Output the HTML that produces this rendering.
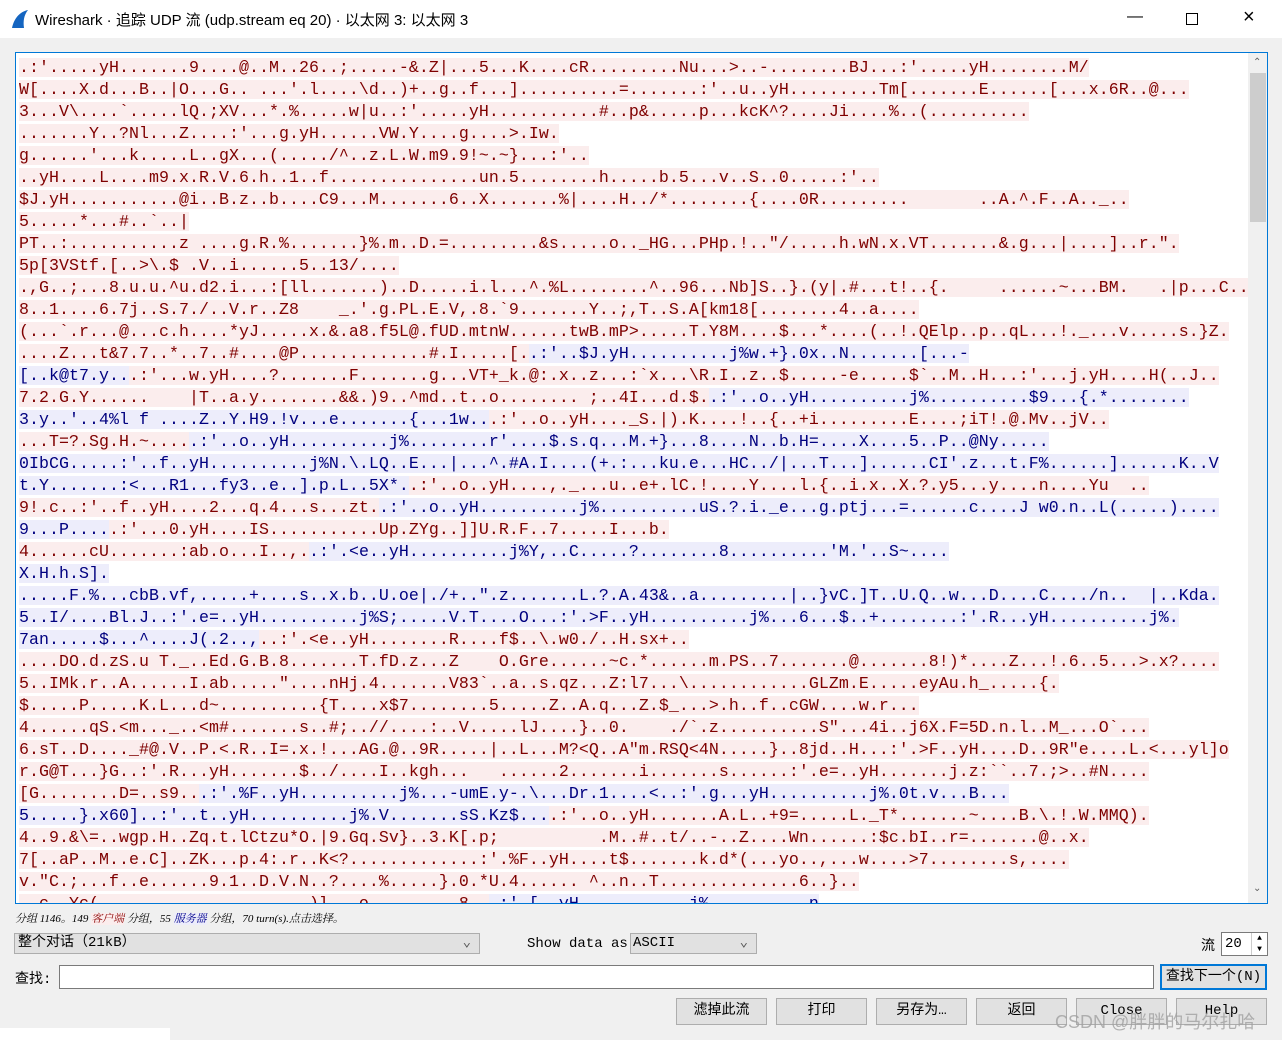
<!DOCTYPE html>
<html><head><meta charset="utf-8">
<style>
*{margin:0;padding:0;box-sizing:border-box}
body{width:1282px;height:1040px;background:#f0f0f0;font-family:"Liberation Sans","Noto Sans CJK SC",sans-serif;position:relative;overflow:hidden}
.title{position:absolute;left:0;top:0;width:1282px;height:38px;background:#fff;font-size:15px;color:#000}
.title .t{position:absolute;left:35px;top:9px}
.wc{position:absolute;top:8px;font-size:16px;color:#000}
.box{position:absolute;left:15px;top:52px;width:1253px;height:852px;background:#fff;border:1px solid #0078d7;overflow:hidden}
.txt{position:absolute;left:3px;top:4px;font-family:"Liberation Mono","DejaVu Sans Mono",monospace;font-size:16.6px;line-height:22px;letter-spacing:0.04px}
.txt div{height:22px;white-space:nowrap}
.txt span{white-space:pre}
.c{background:#fbeded;color:#7f0000}
.s{background:#ededfb;color:#00007f}
.sb{position:absolute;right:0;top:0;width:19px;height:850px;background:#f0f0f0}
.thumb{position:absolute;left:2px;top:20px;width:16px;height:149px;background:#cdcdcd}
.status{position:absolute;left:15px;top:910px;font-size:11px;font-style:italic;font-family:"Liberation Serif","Noto Serif CJK SC",serif}
.combo{position:absolute;background:#e1e1e1;border:1px solid #adadad;font-size:14px;font-family:"Liberation Mono","Noto Sans CJK SC",monospace}
.btn{position:absolute;top:998px;height:27px;width:91px;background:#e1e1e1;border:1px solid #adadad;font-size:14px;text-align:center;line-height:25px;font-family:"Liberation Mono","Noto Sans CJK SC",monospace}
.lbl{position:absolute;font-size:14px;font-family:"Liberation Mono","Noto Sans CJK SC",monospace}
</style></head><body>
<div class="title">
<svg style="position:absolute;left:10px;top:9px" width="20" height="20" viewBox="0 0 20 20"><path d="M2 19 C4 10 9 3 18 1 C14 6 13 12 14 19 Z" fill="#1565c0"/></svg>
<div class="t">Wireshark · 追踪 UDP 流 (udp.stream eq 20) · 以太网 3: 以太网 3</div>
<div class="wc" style="left:1127px">&#8212;</div>
<div style="position:absolute;left:1186px;top:13px;width:12px;height:12px;border:1px solid #000"></div>
<div class="wc" style="left:1243px;top:6px;font-size:20px">&#215;</div>
</div>
<div class="box">
<div class="txt"><div><span class="c">.:'.....yH.......9....@..M..26..;.....-&amp;.Z|...5...K....cR.........Nu...&gt;..-........BJ...:'.....yH........M/</span></div><div><span class="c">W[....X.d...B..|O...G.. ...'.l....\d..)+..g..f...]..........=.......:'..u..yH.........Tm[.......E......[...x.6R..@...</span></div><div><span class="c">3...V\....`.....lQ.;XV...*.%.....w|u..:'.....yH...........#..p&amp;.....p...kcK^?....Ji....%..(..........</span></div><div><span class="c">.......Y..?Nl...Z....:'...g.yH......VW.Y....g....&gt;.Iw.</span></div><div><span class="c">g......'...k.....L..gX...(...../^..z.L.W.m9.9!~.~}...:'..</span></div><div><span class="c">..yH....L....m9.x.R.V.6.h..1..f...............un.5........h.....b.5...v..S..0.....:'..</span></div><div><span class="c">$J.yH...........@i..B.z..b....C9...M.......6..X.......%|....H../*........{....0R.........       ..A.^.F..A.._..</span></div><div><span class="c">5.....*...#..`..|</span></div><div><span class="c">PT..:...........z ....g.R.%.......}%.m..D.=.........&amp;s.....o.._HG...PHp.!.."/.....h.wN.x.VT.......&amp;.g...|....]..r.".</span></div><div><span class="c">5p[3VStf.[..&gt;\.$ .V..i......5..13/....</span></div><div><span class="c">.,G..;...8.u.u.^u.d2.i...:[ll.......)..D.....i.l...^.%L........^..96...Nb]S..}.(y|.#...t!..{.     ......~...BM.   .|p...C..</span></div><div><span class="c">8..1....6.7j..S.7./..V.r..Z8    _.'.g.PL.E.V,.8.`9.......Y..;,T..S.A[km18[........4..a....</span></div><div><span class="c">(...`.r...@...c.h....*yJ.....x.&amp;.a8.f5L@.fUD.mtnW......twB.mP&gt;.....T.Y8M....$...*....(..!.QElp..p..qL...!._...v.....s.}Z.</span></div><div><span class="c">....Z...t&amp;7.7..*..7..#....@P.............#.I.....[.</span><span class="s">.:'..$J.yH..........j%w.+}.0x..N.......[...-</span></div><div><span class="s">[..k@t7.y..</span><span class="c">.:'...w.yH....?.......F.......g...VT+_k.@:.x..z...:`x...\R.I..z..$.....-e.....$`..M..H...:'...j.yH....H(..J..</span></div><div><span class="c">7.2.G.Y......    |T..a.y........&amp;&amp;.)9..^md..t..o........ ;..4I...d.$.</span><span class="s">.:'..o..yH..........j%..........$9...{.*........</span></div><div><span class="s">3.y..'..4%l f ....Z..Y.H9.!v...e.......{...1w..</span><span class="c">.:'..o..yH...._S.|).K....!..{..+i.........E....;iT!.@.Mv..jV..</span></div><div><span class="c">...T=?.Sg.H.~....</span><span class="s">.:'..o..yH..........j%........r'....$.s.q...M.+}...8....N..b.H=....X....5..P..@Ny.....</span></div><div><span class="s">0IbCG.....:'..f..yH..........j%N.\.LQ..E...|...^.#A.I....(+.:...ku.e...HC../|...T...]......CI'.z...t.F%......]......K..V</span></div><div><span class="s">t.Y.......:&lt;...R1...fy3..e..].p.L..5X*.</span><span class="c">.:'..o..yH....,._...u..e+.lC.!....Y....l.{..i.x..X.?.y5...y....n....Yu  ..</span></div><div><span class="c">9!.c..:'..f..yH....2...q.4...s...zt.</span><span class="s">.:'..o..yH..........j%..........uS.?.i._e...g.ptj...=......c....J w0.n..L(.....)....</span></div><div><span class="s">9...P....</span><span class="c">.:'...0.yH....IS...........Up.ZYg..]]U.R.F..7.....I...b.</span></div><div><span class="c">4......cU.......:ab.o...I..,.</span><span class="s">.:'.&lt;e..yH..........j%Y,..C.....?........8..........'M.'..S~....</span></div><div><span class="s">X.H.h.S].</span></div><div><span class="s">.....F.%...cbB.vf,.....+....s..x.b..U.oe|./+..".z.......L.?.A.43&amp;..a.........|..}vC.]T..U.Q..w...D....C..../n..  |..Kda.</span></div><div><span class="s">5..I/....Bl.J..:'.e=..yH..........j%S;.....V.T....O...:'.&gt;F..yH..........j%...6...$..+........:'.R...yH..........j%.</span></div><div><span class="s">7an.....$...^....J(.2..,</span><span class="c">..:'.&lt;e..yH........R....f$..\.w0./..H.sx+..</span></div><div><span class="c">....DO.d.zS.u T._..Ed.G.B.8.......T.fD.z...Z    O.Gre......~c.*......m.PS..7.......@.......8!)*....Z...!.6..5...&gt;.x?....</span></div><div><span class="c">5..IMk.r..A......I.ab....."....nHj.4.......V83`..a..s.qz...Z:l7...\............GLZm.E.....eyAu.h_.....{.</span></div><div><span class="c">$.....P.....K.L...d~..........{T....x$7........5.....Z..A.q...Z.$_...&gt;.h..f..cGW....w.r...</span></div><div><span class="c">4......qS.&lt;m..._..&lt;m#.......s..#;..//....:..V.....lJ....}..0.    ./`.z..........S"...4i..j6X.F=5D.n.l..M_...O`...</span></div><div><span class="c">6.sT..D...._#@.V..P.&lt;.R..I=.x.!...AG.@..9R.....|..L...M?&lt;Q..A"m.RSQ&lt;4N.....}..8jd..H...:'.&gt;F..yH....D..9R"e....L.&lt;...yl]o</span></div><div><span class="c">r.G@T...}G..:'.R...yH.......$../....I..kgh...   ......2.......i.......s......:'.e=..yH.......j.z:``..7.;&gt;..#N....</span></div><div><span class="c">[G........D=..s9..</span><span class="s">.:'.%F..yH..........j%...-umE.y-.\...Dr.1....&lt;..:'.g...yH..........j%.0t.v...B...</span></div><div><span class="s">5.....}.x60]..:'..t..yH..........j%.V.......sS.Kz$...</span><span class="c">.:'..o..yH.......A.L..+9=.....L._T*.......~....B.\.!.W.MMQ).</span></div><div><span class="c">4..9.&amp;\=..wgp.H..Zq.t.lCtzu*O.|9.Gq.Sv}..3.K[.p;          .M..#..t/..-..Z....Wn......:$c.bI..r=.......@..x.</span></div><div><span class="c">7[..aP..M..e.C]..ZK...p.4:.r..K&lt;?.............:'.%F..yH....t$.......k.d*(...yo..,...w....&gt;7........s,....</span></div><div><span class="c">v."C.;...f..e......9.1..D.V.N..?....%.....}.0.*U.4...... ^..n..T..............6..}..</span></div><div><span class="c">..c..Yc(.....................)l...o.........8..</span><span class="s">.:'.[..yH...........j%..........n</span></div></div>
<div class="sb"><div style="position:absolute;left:5px;top:4px;font-size:10px;color:#606060">&#8963;</div><div class="thumb"></div><div style="position:absolute;left:5px;top:830px;font-size:10px;color:#606060">&#8964;</div></div>
</div>
<div class="status">分组 1146。149 <span style="color:#8b0000;background:#fbeded">客户端</span> 分组，55 <span style="color:#00008b;background:#ededfb">服务器</span> 分组，70 turn(s).点击选择。</div>
<div class="combo" style="left:14px;top:933px;width:466px;height:21px;padding-left:3px;line-height:19px">整个对话（21kB）<span style="position:absolute;right:8px;top:0;color:#555">&#8964;</span></div>
<div class="lbl" style="left:527px;top:936px">Show data as</div>
<div class="combo" style="left:630px;top:933px;width:127px;height:21px;padding-left:2px;line-height:19px">ASCII<span style="position:absolute;right:8px;top:0;color:#555">&#8964;</span></div>
<div class="lbl" style="left:1201px;top:935px">流</div>
<div style="position:absolute;left:1221px;top:932px;width:47px;height:24px;background:#fff;border:1px solid #7a7a7a;font-size:14px;font-family:'Liberation Mono',monospace;padding:3px 0 0 3px">20<div style="position:absolute;right:0;top:0;width:16px;height:22px;border-left:1px solid #ccc;font-size:8px;line-height:11px;text-align:center">&#9650;<br>&#9660;</div></div>
<div class="lbl" style="left:15px;top:968px">查找:</div>
<div style="position:absolute;left:59px;top:965px;width:1095px;height:24px;background:#fff;border:1px solid #7a7a7a"></div>
<div style="position:absolute;left:1160px;top:964px;width:107px;height:26px;background:#e1e1e1;border:2px solid #0078d7;font-size:14px;text-align:center;line-height:22px;font-family:'Liberation Mono','Noto Sans CJK SC',monospace">查找下一个(N)</div>
<div class="btn" style="left:676px">滤掉此流</div>
<div class="btn" style="left:776px">打印</div>
<div class="btn" style="left:876px">另存为…</div>
<div class="btn" style="left:976px">返回</div>
<div class="btn" style="left:1076px">Close</div>
<div class="btn" style="left:1176px">Help</div>
<div style="position:absolute;left:1055px;top:1008px;font-size:18px;color:rgba(160,160,160,0.8)">CSDN @胖胖的马尔扎哈</div>
<div style="position:absolute;left:0;top:1028px;width:170px;height:12px;background:#fff"></div>
</body></html>
